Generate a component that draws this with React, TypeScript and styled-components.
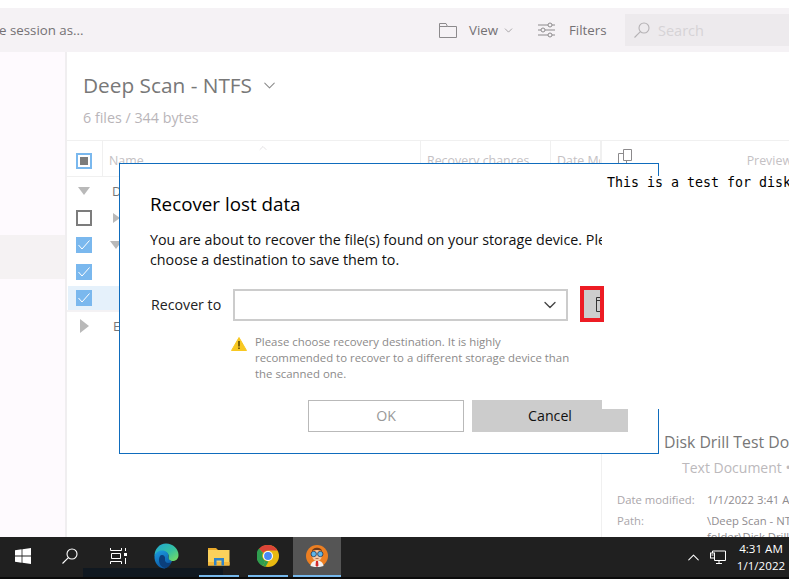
import React from 'react';
import styled, { createGlobalStyle } from 'styled-components';
import { ChevronDown, ChevronUp } from 'lucide-react';

const Global = createGlobalStyle`
  html, body { margin: 0; padding: 0; background: #fff; }
  * { box-sizing: border-box; }
  body { font-family: "Open Sans", "Noto Sans", Arial, sans-serif; }
`;

const Page = styled.div`
  width: 789px;
  height: 579px;
  overflow: hidden;
  display: flex;
  flex-direction: column;
  padding-top: 8px;
  background: #fff;
`;

const Toolbar = styled.div`
  height: 44px;
  flex: none;
  display: flex;
  align-items: center;
  background: #f5f2f5;
  color: #747174;
  font-size: 13.3px;
`;

const SessionText = styled.span`
  margin-left: -1px;
  flex: 1;
`;

const ToolIcon = styled.svg`
  display: block;
  flex: none;
`;

const ToolLabel = styled.span<{ $gap: number }>`
  margin-left: ${p => p.$gap}px;
`;

const ToolGroup = styled.div<{ $width: number }>`
  width: ${p => p.$width}px;
  display: flex;
  align-items: center;
`;

const SearchBox = styled.div`
  width: 164px;
  height: 32px;
  margin-left: 20px;
  padding-left: 9px;
  display: flex;
  align-items: center;
  background: #edeaed;
  color: #d6d3d6;
  font-size: 14.5px;
`;

const Content = styled.div`
  flex: 1;
  display: flex;
  min-height: 0;
`;

const Sidebar = styled.div`
  width: 67px;
  flex: none;
  padding-top: 183px;
  background: #fefafe;
  border-right: 2px solid #f0eef0;
`;

const SidebarActive = styled.div`
  height: 44px;
  background: #f5f2f3;
`;

const Main = styled.div`
  width: 534px;
  flex: none;
`;

const Title = styled.div`
  height: 36px;
  margin-top: 15px;
  padding-left: 16px;
  display: flex;
  align-items: center;
  gap: 8px;
  color: #787878;
  font-size: 20.8px;
  font-weight: 500;
`;

const Subtitle = styled.div`
  height: 37px;
  padding: 5px 0 0 16px;
  color: #b9b5b9;
  font-size: 14.3px;
`;

const HeaderRow = styled.div`
  height: 37px;
  display: flex;
  border-top: 1px solid #f0f0f0;
  border-bottom: 1px solid #f0f0f0;
  color: #c4c1c4;
  font-size: 12.4px;
`;

const HeaderCell = styled.div<{ $width: number }>`
  position: relative;
  width: ${p => p.$width}px;
  flex: none;
  padding: 11px 0 0 6px;
  display: flex;
  white-space: nowrap;
  overflow: hidden;
  border-right: 1px solid #f0f0f0;
`;

const CheckCell = styled.div`
  width: 36px;
  flex: none;
  display: flex;
  align-items: center;
  padding: 5px 0 0 9px;
  border-right: 1px solid #f0f0f0;
`;

const SortCaret = styled.span`
  position: absolute;
  top: 1px;
  left: 154px;
  display: flex;
  color: #c8c5c8;
`;

const Row = styled.div<{ $divided?: boolean }>`
  height: 27px;
  display: flex;
  align-items: center;
  padding: 0 0 0 1px;
  border-bottom: ${p => (p.$divided ? '2px solid #f4f2f4' : 'none')};
  color: #777;
  font-size: 13px;
`;

const RowFill = styled.div<{ $selected?: boolean }>`
  width: 100%;
  height: 24px;
  display: flex;
  align-items: center;
  padding-left: 8px;
  background: ${p => (p.$selected ? '#e5f1fb' : 'transparent')};
`;

const CheckBox = styled.span<{ $state: 'mixed' | 'off' | 'on' }>`
  width: 16px;
  height: 16px;
  flex: none;
  display: flex;
  align-items: center;
  justify-content: center;
  border: 2px solid ${p => (p.$state === 'off' ? '#7c7c7c' : '#7ab8ee')};
  background: ${p => (p.$state === 'on' ? '#7ab8ee' : '#fff')};
`;

const MixedMark = styled.span`
  width: 8px;
  height: 8px;
  background: #7c7c7c;
`;

const Caret = styled.span<{ $dir: 'down' | 'right'; $left: number; $size: number }>`
  flex: none;
  width: 0;
  height: 0;
  margin-left: ${p => p.$left}px;
  border-style: solid;
  border-color: transparent;
  ${p =>
    p.$dir === 'down'
      ? `border-width: ${p.$size}px ${p.$size * 0.8}px 0; border-top-color: #b9b9b9;`
      : `border-width: ${p.$size * 0.8}px 0 ${p.$size * 0.8}px ${p.$size}px; border-left-color: #b9b9b9;`}
`;

const RowName = styled.span<{ $left: number }>`
  margin-left: ${p => p.$left}px;
`;

const Preview = styled.div`
  flex: 1;
  min-width: 0;
  display: flex;
  flex-direction: column;
  padding-top: 88px;
  overflow: hidden;
`;

const PreviewHeader = styled.div`
  height: 37px;
  flex: none;
  display: flex;
  justify-content: space-between;
  padding: 8px 0 0 16px;
  border: 1px solid #f0f0f0;
  border-width: 1px 0 1px 1px;
  color: #c4c1c4;
  font-size: 12.4px;
  white-space: nowrap;
`;

const PreviewLabel = styled.span`
  margin: 3px -3px 0 0;
`;

const PreviewDoc = styled.div`
  position: relative;
  z-index: 1;
  height: 233px;
  flex: none;
  margin: -1px 0 0 1px;
  padding: 0 0 0 5px;
  background: #fff;
  color: #000;
  font-family: "DejaVu Sans Mono", "Liberation Mono", monospace;
  font-size: 13.3px;
  line-height: 14px;
  white-space: nowrap;
`;

const PreviewInfo = styled.div`
  flex: 1;
  border-left: 1px solid #f0f0f0;
  white-space: nowrap;
`;

const FileName = styled.div`
  margin: 22px 0 0 62px;
  color: #777;
  font-size: 15.8px;
  line-height: 22px;
`;

const FileKind = styled.div`
  margin: 5px 0 0 80px;
  color: #bcb9bc;
  font-size: 14px;
  line-height: 20px;
`;

const Details = styled.div`
  margin: 14px 0 0 15px;
  display: grid;
  grid-template-columns: 90px 1fr;
  color: #aaa6aa;
  font-size: 11.3px;
  line-height: 16px;
`;

const DetailValue = styled.span`
  color: #8f8c8f;
`;

const DetailKey = styled.span`
  margin-bottom: 5px;
`;

const Dialog = styled.div`
  position: absolute;
  left: 119px;
  top: 163px;
  width: 540px;
  height: 291px;
  padding: 28px 30px 0;
  background: #fff;
  border: 1px solid #0f6cbd;
  color: #000;
`;

const DialogTitle = styled.div`
  font-size: 18.8px;
  line-height: 24px;
`;

const DialogBody = styled.div`
  margin-top: 14px;
  font-size: 14.3px;
  line-height: 20px;
  white-space: pre;
  color: #111;
`;

const RecoverRow = styled.div`
  margin-top: 16px;
  height: 36px;
  display: flex;
  align-items: center;
`;

const RecoverLabel = styled.span`
  width: 83px;
  flex: none;
  padding-left: 1px;
  margin-top: 1px;
  font-size: 14.2px;
  color: #222;
`;

const Select = styled.div`
  width: 335px;
  height: 32px;
  flex: none;
  margin-top: 1px;
  padding-right: 6px;
  display: flex;
  align-items: center;
  justify-content: flex-end;
  border: 2px solid #ccc;
  color: #444;
`;

const BrowseButton = styled.div`
  position: relative;
  z-index: 2;
  width: 24px;
  height: 36px;
  flex: none;
  margin-left: 12px;
  padding: 7px 0 0 12px;
  overflow: hidden;
  background: #cdcdcd;
  border: 4px solid #ed1c24;
`;

const WarningRow = styled.div`
  margin: 12px 0 0 81px;
  display: flex;
  gap: 8px;
  color: #8c8a8a;
  font-size: 11.4px;
  line-height: 16px;
  white-space: pre;
`;

const WarningIcon = styled.svg`
  flex: none;
  margin-top: 3px;
`;

const DialogActions = styled.div`
  margin: 18px 0 0 158px;
  display: flex;
  gap: 8px;
`;

const DialogButton = styled.div<{ $primary?: boolean }>`
  width: 156px;
  height: 32px;
  padding-bottom: 2px;
  display: flex;
  align-items: center;
  justify-content: center;
  font-size: 14.2px;
  border: ${p => (p.$primary ? 'none' : '1px solid #b9b9b9')};
  background: ${p => (p.$primary ? '#cccccc' : '#fff')};
  color: ${p => (p.$primary ? '#111' : '#999')};
`;

const Taskbar = styled.div`
  position: relative;
  z-index: 3;
  height: 42px;
  flex: none;
  margin-top: auto;
  display: flex;
  background: #202020;
  border-bottom: 2px solid #0b0b0b;
  color: #fff;
`;

const TaskSlot = styled.div<{ $width: number; $active?: boolean; $running?: boolean; $gap?: number }>`
  position: relative;
  width: ${p => p.$width}px;
  margin-left: ${p => p.$gap ?? 0}px;
  flex: none;
  display: flex;
  align-items: center;
  justify-content: center;
  background: ${p => (p.$active ? '#555' : 'transparent')};
  border-bottom: 2px solid ${p => (p.$running ? '#76b9ed' : 'transparent')};
`;

const SearchShade = styled.span`
  position: absolute;
  left: 83px;
  bottom: 0;
  width: 140px;
  height: 9px;
  background: #101820;
`;

const Tray = styled.div`
  margin-left: auto;
  display: flex;
  align-items: center;
`;

const Clock = styled.div`
  width: 56px;
  margin-left: 7px;
  text-align: center;
  font-size: 11.6px;
  line-height: 17px;
`;

const Tick = () => (
  <svg width="12" height="10" viewBox="0 0 12 10" fill="none" stroke="#fff" strokeWidth="1">
    <path d="M0.5 5 L4 9 L11.5 0.5" />
  </svg>
);

const FolderOutline = () => (
  <ToolIcon width="18" height="15" viewBox="0 0 18 15" fill="none" stroke="#8c8a8c" strokeWidth="1">
    <path d="M0.5 14.5 V0.5 H7 L8.5 3.5 H17.5 V14.5 Z M0.5 3.5 H8.5" />
  </ToolIcon>
);

const FolderOutlineDark = () => (
  <ToolIcon width="18" height="15" viewBox="0 0 18 15" fill="none" stroke="#333" strokeWidth="1">
    <path d="M0.5 14.5 V0.5 H7 L8.5 3.5 H17.5 V14.5 Z M0.5 3.5 H8.5" />
  </ToolIcon>
);

const FiltersGlyph = () => (
  <ToolIcon width="17" height="16" viewBox="0 0 17 16" fill="none" stroke="#8c8a8c" strokeWidth="1">
    <path d="M0 3 H10 M14 3 H17 M0 8 H3 M7 8 H17 M0 13 H10 M14 13 H17" />
    <circle cx="12" cy="3" r="2" />
    <circle cx="5" cy="8" r="2" />
    <circle cx="12" cy="13" r="2" />
  </ToolIcon>
);

const SearchGlyph = ({ color, size }: { color: string; size: number }) => (
  <ToolIcon width={size} height={size} viewBox="0 0 16 16" fill="none" stroke={color} strokeWidth="1.1">
    <circle cx="10" cy="6" r="5" />
    <path d="M6.4 9.6 L0.5 15.5" />
  </ToolIcon>
);

const CopyGlyph = () => (
  <ToolIcon width="14" height="17" viewBox="0 0 14 17" fill="none" stroke="#8c8a8c" strokeWidth="1">
    <path d="M5.5 0.5 H13.5 V11.5 H5.5 Z M5.5 4.5 H0.5 V14.5 M8.5 11.5 V16.5" />
  </ToolIcon>
);

const WindowsLogo = () => (
  <svg width="16" height="16" viewBox="0 0 16 16" fill="#fff">
    <path d="M0 2.3 L6.6 1.3 V7.5 H0 Z M7.4 1.2 L16 0 V7.5 H7.4 Z M0 8.4 H6.6 V14.7 L0 13.7 Z M7.4 8.4 H16 V16 L7.4 14.8 Z" />
  </svg>
);

const TaskView = () => (
  <svg width="17" height="16" viewBox="0 0 17 16" fill="none" stroke="#fff" strokeWidth="1">
    <path d="M0.5 0 V2.5 H11.5 V0 M0.5 16 V13.5 H11.5 V16 M1.5 5.5 H10.5 V10.5 H1.5 Z M15.5 0 V3 M15.5 10 V16" />
    <rect x="14" y="5" width="3" height="3" fill="#fff" stroke="none" />
  </svg>
);

const EdgeLogo = () => (
  <svg width="25" height="26" viewBox="0 0 25 26">
    <defs>
      <linearGradient id="edgeBlue" x1="0" y1="0" x2="0.4" y2="1">
        <stop offset="0" stopColor="#1b9de2" />
        <stop offset="1" stopColor="#0c59a4" />
      </linearGradient>
      <linearGradient id="edgeGreen" x1="0" y1="0" x2="1" y2="1">
        <stop offset="0" stopColor="#1fa5d8" />
        <stop offset="0.55" stopColor="#35c1a0" />
        <stop offset="1" stopColor="#7fe05a" />
      </linearGradient>
    </defs>
    <path d="M12 0.5 C19 0.5 24.5 6 24.5 12 C24.5 17 20.5 18.5 17.5 18 C15 17.5 14 16 14.5 14 C15.5 10 10 7 5 9 C2.5 10 1 12 0.5 13 C0.5 6 5.5 0.5 12 0.5 Z" fill="url(#edgeGreen)" />
    <path d="M0.5 13 C1 10 4 7.5 8 7.5 C12 7.5 15 10 14.5 13 C14 15 15 17.5 18 18 C16 23 12 25.5 10 25.5 C4 25 0 19 0.5 13 Z" fill="url(#edgeBlue)" />
    <path d="M8 12 C10 12 11.5 14 11 16 C10.5 19 13 21.5 17.5 19 C16 23 13 25 11 25 C7 24 5 21 5 17 C5 14 6 12 8 12 Z" fill="#0b3f7c" />
  </svg>
);

const ExplorerLogo = () => (
  <svg width="22" height="19" viewBox="0 0 22 19">
    <path d="M0 1 H8 L10 3 H20 V5 H0 Z" fill="#e9a92a" />
    <path d="M0 3 H21.5 V18.5 H0 Z" fill="#fbd15c" />
    <path d="M0 18.5 V15 H21.5 V18.5 Z" fill="#f4b93c" />
    <path d="M6 18.5 V11 H16 V18.5 H13.5 V13.5 H8.5 V18.5 Z" fill="#2f83c9" />
  </svg>
);

const ChromeLogo = () => (
  <svg width="22" height="22" viewBox="0 0 22 22">
    <circle cx="11" cy="11" r="11" fill="#e8b910" />
    <path d="M11 0 A11 11 0 0 1 20.5 5.5 H11 A5.5 5.5 0 0 0 6 8 L2 3.6 A11 11 0 0 1 11 0 Z" fill="#dc4437" />
    <path d="M2 3.6 L6 8 A5.5 5.5 0 0 0 8.2 15.7 L6 21 A11 11 0 0 1 2 3.6 Z" fill="#2f9e4f" />
    <path d="M6 21 L8.2 15.7 L11.5 16.5 L8.5 21.8 Z" fill="#2f9e4f" />
    <circle cx="11" cy="11" r="5" fill="#fff" />
    <circle cx="11" cy="11" r="3.9" fill="#4a8af4" />
  </svg>
);

const DrillAvatar = () => (
  <svg width="22" height="22" viewBox="0 0 22 22">
    <circle cx="11" cy="11" r="11" fill="#ec7f22" />
    <path d="M4.5 21 C5 17 8 15.5 11 15.5 C14 15.5 17 17 17.5 21 C14 22.5 8 22.5 4.5 21 Z" fill="#f2f2f2" />
    <path d="M10 16 H12 L12.5 20.5 L11 22 L9.5 20.5 Z" fill="#d42b2b" />
    <ellipse cx="11" cy="10.5" rx="4.8" ry="5.6" fill="#f3c7a2" />
    <path d="M6 6.5 C6 1.5 16 1.5 16 6.5 L14.5 5 H7.5 Z" fill="#6a3a1c" />
    <circle cx="7.7" cy="9" r="2.7" fill="#5db7ea" stroke="#2a3a55" strokeWidth="0.8" />
    <circle cx="14.3" cy="9" r="2.7" fill="#5db7ea" stroke="#2a3a55" strokeWidth="0.8" />
    <path d="M9.5 13.5 H12.5" stroke="#a05a3a" strokeWidth="0.8" />
  </svg>
);

const NetworkGlyph = () => (
  <svg width="16" height="14" viewBox="0 0 16 14" fill="none" stroke="#fff" strokeWidth="1">
    <path d="M2.5 3 V1 H15.5 V10.5 H4.5 V8 M9 10.5 V13.5 M6 13.5 H12" />
    <rect x="0.5" y="3" width="4" height="5" />
    <path d="M1.5 5 H3.5" />
  </svg>
);

export default function App() {
  return (
    <Page>
      <Global />
      <Toolbar>
        <SessionText>e session as...</SessionText>
        <ToolGroup $width={99}>
          <FolderOutline />
          <ToolLabel $gap={12}>View</ToolLabel>
          <ChevronDown size={13} strokeWidth={1.1} style={{ marginLeft: 4 }} />
        </ToolGroup>
        <ToolGroup $width={67}>
          <FiltersGlyph />
          <ToolLabel $gap={14}>Filters</ToolLabel>
        </ToolGroup>
        <SearchBox>
          <SearchGlyph color="#b5b2b5" size={16} />
          <ToolLabel $gap={8}>Search</ToolLabel>
        </SearchBox>
      </Toolbar>

      <Content>
        <Sidebar>
          <SidebarActive />
        </Sidebar>

        <Main>
          <Title>
            Deep Scan - NTFS
            <ChevronDown size={19} strokeWidth={1.3} color="#8a8a8a" />
          </Title>
          <Subtitle>6 files / 344 bytes</Subtitle>

          <HeaderRow>
            <CheckCell>
              <CheckBox $state="mixed">
                <MixedMark />
              </CheckBox>
            </CheckCell>
            <HeaderCell $width={318}>
              Name
              <SortCaret>
                <ChevronUp size={12} strokeWidth={1} />
              </SortCaret>
            </HeaderCell>
            <HeaderCell $width={130}>Recovery chances</HeaderCell>
            <HeaderCell $width={50}>Date Modified</HeaderCell>
          </HeaderRow>

          <Row>
            <RowFill>
              <Caret $dir="down" $left={2} $size={8} />
              <RowName $left={22}>Deep Scan</RowName>
            </RowFill>
          </Row>
          <Row>
            <RowFill>
              <CheckBox $state="off" />
              <Caret $dir="right" $left={21} $size={7} />
            </RowFill>
          </Row>
          <Row>
            <RowFill>
              <CheckBox $state="on">
                <Tick />
              </CheckBox>
              <Caret $dir="down" $left={18} $size={8} />
            </RowFill>
          </Row>
          <Row>
            <RowFill>
              <CheckBox $state="on">
                <Tick />
              </CheckBox>
            </RowFill>
          </Row>
          <Row $divided>
            <RowFill $selected>
              <CheckBox $state="on">
                <Tick />
              </CheckBox>
            </RowFill>
          </Row>
          <Row>
            <RowFill>
              <Caret $dir="right" $left={4} $size={9} />
              <RowName $left={24}>Existing</RowName>
            </RowFill>
          </Row>
        </Main>

        <Preview>
          <PreviewHeader>
            <CopyGlyph />
            <PreviewLabel>Preview</PreviewLabel>
          </PreviewHeader>
          <PreviewDoc>This is a test for disk drill</PreviewDoc>
          <PreviewInfo>
            <FileName>Disk Drill Test Document</FileName>
            <FileKind>Text Document • 344 bytes</FileKind>
            <Details>
              <DetailKey>Date modified:</DetailKey>
              <DetailValue>1/1/2022 3:41 AM</DetailValue>
              <DetailKey>Path:</DetailKey>
              <DetailValue>
                \Deep Scan - NTFS\
                <br />
                folder\Disk Drill
              </DetailValue>
            </Details>
          </PreviewInfo>
        </Preview>
      </Content>

      <Taskbar>
        <SearchShade />
        <TaskSlot $width={46}>
          <WindowsLogo />
        </TaskSlot>
        <TaskSlot $width={48}>
          <SearchGlyph color="#fff" size={16} />
        </TaskSlot>
        <TaskSlot $width={48}>
          <TaskView />
        </TaskSlot>
        <TaskSlot $width={48}>
          <EdgeLogo />
        </TaskSlot>
        <TaskSlot $width={40} $gap={9} $running>
          <ExplorerLogo />
        </TaskSlot>
        <TaskSlot $width={40} $gap={9} $running>
          <ChromeLogo />
        </TaskSlot>
        <TaskSlot $width={48} $gap={5} $active $running>
          <DrillAvatar />
        </TaskSlot>
        <Tray>
          <ChevronUp size={19} strokeWidth={1.3} style={{ marginRight: 7 }} />
          <NetworkGlyph />
          <Clock>
            4:31 AM
            <br />
            1/1/2022
          </Clock>
        </Tray>
      </Taskbar>

      <Dialog>
        <DialogTitle>Recover lost data</DialogTitle>
        <DialogBody>
          {'You are about to recover the file(s) found on your storage device. Please\nchoose a destination to save them to.'}
        </DialogBody>
        <RecoverRow>
          <RecoverLabel>Recover to</RecoverLabel>
          <Select>
            <ChevronDown size={20} strokeWidth={1.6} />
          </Select>
          <BrowseButton>
            <FolderOutlineDark />
          </BrowseButton>
        </RecoverRow>
        <WarningRow>
          <WarningIcon width="16" height="14" viewBox="0 0 16 14">
            <path d="M8 0.5 L15.5 13.5 H0.5 Z" fill="#f8c822" stroke="#f8c822" strokeLinejoin="round" />
            <path d="M7.3 4 H8.7 V9.5 H7.3 Z M7.3 10.5 H8.7 V12 H7.3 Z" fill="#4a3a00" />
          </WarningIcon>
          {'Please choose recovery destination. It is highly\nrecommended to recover to a different storage device than\nthe scanned one.'}
        </WarningRow>
        <DialogActions>
          <DialogButton>OK</DialogButton>
          <DialogButton $primary>Cancel</DialogButton>
        </DialogActions>
      </Dialog>
    </Page>
  );
}
